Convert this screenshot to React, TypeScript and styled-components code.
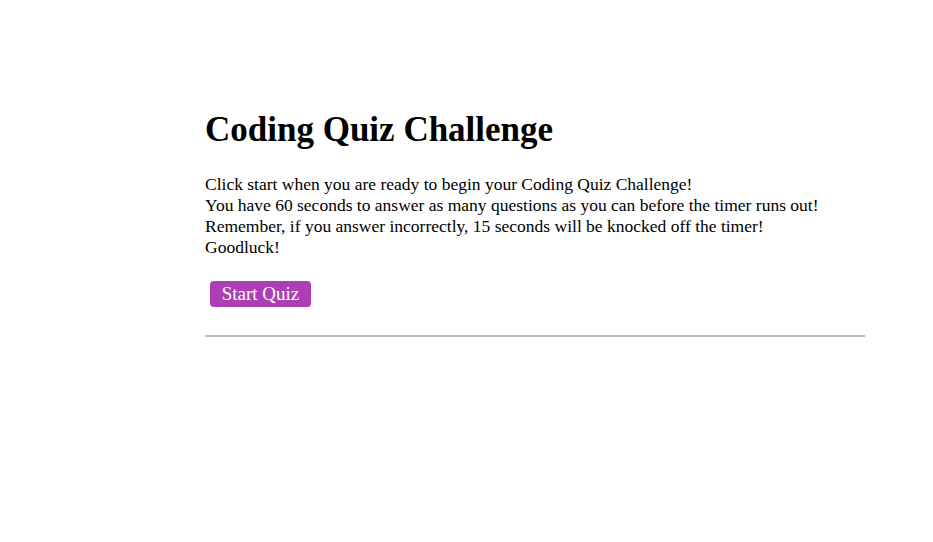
import React from "react";
import styled, { createGlobalStyle } from "styled-components";

const Global = createGlobalStyle`
  html, body { margin: 0; padding: 0; background: #fff; }
  body { font-family: "Liberation Serif", "Times New Roman", serif; color: #000; }
`;

const Main = styled.main`
  width: 660px;
  margin-left: 205px;
  padding-top: 109px;
`;

const Title = styled.h1`
  font-size: 35px;
  font-weight: bold;
  margin: 0 0 23px 0;
  line-height: 42px;
`;

const Intro = styled.p`
  font-size: 17.5px;
  line-height: 21px;
  margin: 0 0 23px 0;
`;

const StartButton = styled.button`
  font-family: "Liberation Serif", "Times New Roman", serif;
  font-size: 19px;
  color: #fff;
  background: #ab3fb3;
  border: none;
  border-radius: 4px;
  height: 26px;
  width: 101px;
  padding: 0;
  margin-left: 5px;
  cursor: pointer;
`;

const Divider = styled.hr`
  border: none;
  height: 2px;
  background: #c5bfc2;
  margin: 28px 0 0 0;
`;

export default function App() {
  return (
    <>
      <Global />
      <Main>
        <Title>Coding Quiz Challenge</Title>
        <Intro>
          Click start when you are ready to begin your Coding Quiz Challenge!
          <br />
          You have 60 seconds to answer as many questions as you can before the timer runs out!
          <br />
          Remember, if you answer incorrectly, 15 seconds will be knocked off the timer!
          <br />
          Goodluck!
        </Intro>
        <StartButton>Start Quiz</StartButton>
        <Divider />
      </Main>
    </>
  );
}
